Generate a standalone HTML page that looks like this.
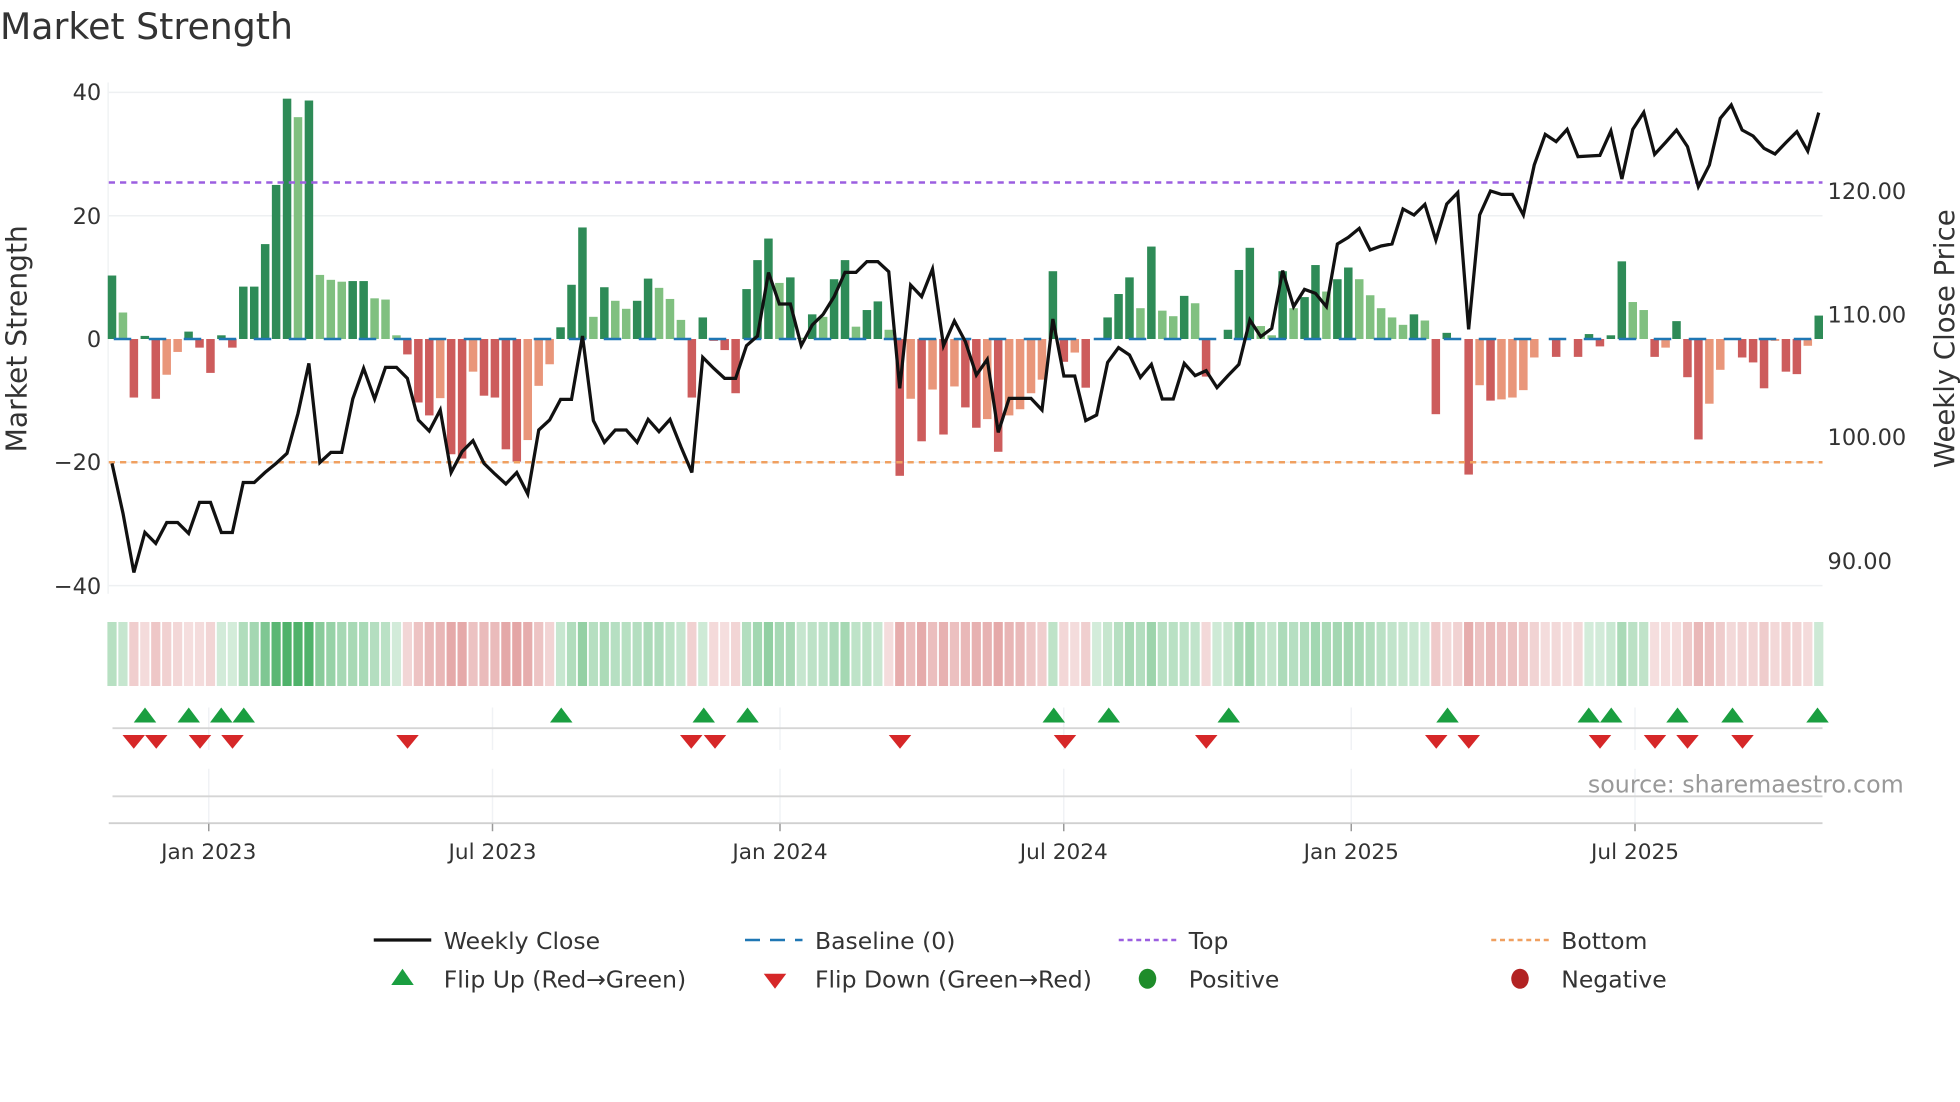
<!DOCTYPE html>
<html><head><meta charset="utf-8"><style>
html,body{margin:0;padding:0;background:#fff;width:1960px;height:1102px;overflow:hidden}
svg{display:block;font-family:"DejaVu Sans","Liberation Sans",sans-serif}
</style></head><body>
<svg id="s" width="1960" height="1102" viewBox="0 0 1568 881.6" xmlns="http://www.w3.org/2000/svg">
<rect width="1568" height="881.6" fill="#fff"/>
<text x="0" y="31" font-size="29" fill="#333">Market Strength</text>
<g stroke="#eef0f2" stroke-width="1.2">
<line x1="87" y1="73.9" x2="1458" y2="73.9"/>
<line x1="87" y1="172.6" x2="1458" y2="172.6"/>
<line x1="87" y1="369.8" x2="1458" y2="369.8"/>
<line x1="87" y1="468.5" x2="1458" y2="468.5"/>
</g>
<line x1="86.5" y1="66" x2="86.5" y2="475" stroke="#eef0f2" stroke-width="1"/>
<g font-size="18" fill="#333" text-anchor="end">
<text x="81" y="80">40</text><text x="81" y="179">20</text><text x="81" y="277.5">0</text>
<text x="81" y="376">−20</text><text x="81" y="475">−40</text>
</g>
<g font-size="18" fill="#333">
<text x="1462" y="159">120.00</text><text x="1462" y="258">110.00</text>
<text x="1462" y="356">100.00</text><text x="1462" y="455">90.00</text>
</g>
<text transform="translate(21,271) rotate(-90)" font-size="22.5" fill="#333" text-anchor="middle">Market Strength</text>
<text transform="translate(1563,271) rotate(-90)" font-size="22" fill="#333" text-anchor="middle">Weekly Close Price</text>
<g id="bars"></g>
<line x1="87" y1="271.2" x2="1458" y2="271.2" stroke="#1f77b4" stroke-width="2" stroke-dasharray="14,14" stroke-dashoffset="-4"/>
<line x1="87" y1="146" x2="1458" y2="146" stroke="#9b5fe0" stroke-width="2" stroke-dasharray="5,4"/>
<line x1="87" y1="369.8" x2="1458" y2="369.8" stroke="#f0a060" stroke-width="2" stroke-dasharray="5,4"/>
<polyline id="pl" fill="none" stroke="#111" stroke-width="2.6" stroke-linejoin="miter"/>
<g id="strip"></g>
<g stroke="#f0f2f5" stroke-width="1.2">
<line x1="167" y1="566" x2="167" y2="600"/><line x1="394" y1="566" x2="394" y2="600"/>
<line x1="624" y1="566" x2="624" y2="600"/><line x1="851" y1="566" x2="851" y2="600"/>
<line x1="1081" y1="566" x2="1081" y2="600"/><line x1="1308" y1="566" x2="1308" y2="600"/>
<line x1="167" y1="615" x2="167" y2="658"/><line x1="394" y1="615" x2="394" y2="658"/>
<line x1="624" y1="615" x2="624" y2="658"/><line x1="851" y1="615" x2="851" y2="658"/>
<line x1="1081" y1="615" x2="1081" y2="658"/><line x1="1308" y1="615" x2="1308" y2="658"/>
</g>
<line x1="90" y1="582.5" x2="1458" y2="582.5" stroke="#d5d5d5" stroke-width="1.5"/>
<line x1="90" y1="637" x2="1458" y2="637" stroke="#d5d5d5" stroke-width="1.5"/>
<line x1="87" y1="658.5" x2="1458" y2="658.5" stroke="#d0d0d0" stroke-width="1.5"/>
<g stroke="#999" stroke-width="1.2">
<line x1="167" y1="659" x2="167" y2="665"/><line x1="394" y1="659" x2="394" y2="665"/>
<line x1="624" y1="659" x2="624" y2="665"/><line x1="851" y1="659" x2="851" y2="665"/>
<line x1="1081" y1="659" x2="1081" y2="665"/><line x1="1308" y1="659" x2="1308" y2="665"/>
</g>
<g id="mk"></g>
<text x="1523" y="634" font-size="19" fill="#999" text-anchor="end">source: sharemaestro.com</text>
<g font-size="17.3" fill="#333" text-anchor="middle">
<text x="167" y="687">Jan 2023</text><text x="394" y="687">Jul 2023</text>
<text x="624" y="687">Jan 2024</text><text x="851" y="687">Jul 2024</text>
<text x="1081" y="687">Jan 2025</text><text x="1308" y="687">Jul 2025</text>
</g>
<g font-size="18.8" fill="#333">
<line x1="299" y1="752" x2="345" y2="752" stroke="#111" stroke-width="2.6"/>
<text x="355" y="759">Weekly Close</text>
<line x1="596" y1="752" x2="642" y2="752" stroke="#1f77b4" stroke-width="2" stroke-dasharray="12,8"/>
<text x="652" y="759">Baseline (0)</text>
<line x1="895" y1="752" x2="941" y2="752" stroke="#9b5fe0" stroke-width="2" stroke-dasharray="4,3"/>
<text x="951" y="759">Top</text>
<line x1="1193" y1="752" x2="1239" y2="752" stroke="#f0a060" stroke-width="2" stroke-dasharray="4,3"/>
<text x="1249" y="759">Bottom</text>
<polygon points="313,788 331,788 322,775" fill="#1a9e40"/>
<text x="355" y="790">Flip Up (Red→Green)</text>
<polygon points="611,779 629,779 620,791" fill="#d62728"/>
<text x="652" y="790">Flip Down (Green→Red)</text>
<ellipse cx="918" cy="783" rx="7" ry="8" fill="#1e8c2a"/>
<text x="951" y="790">Positive</text>
<ellipse cx="1216" cy="783" rx="7" ry="8" fill="#b22222"/>
<text x="1249" y="790">Negative</text>
</g>
</svg>
<script>
var V=[10.3,4.3,-9.5,0.5,-9.7,-5.8,-2.1,1.2,-1.4,-5.5,0.6,-1.4,8.5,8.5,15.4,25,39,36,38.7,10.4,9.6,9.3,9.4,9.4,6.6,6.4,0.6,-2.5,-10.3,-12.4,-9.6,-18.7,-19.4,-5.3,-9.2,-9.5,-17.9,-19.9,-16.4,-7.6,-4.1,1.9,8.8,18.1,3.6,8.4,6.2,4.9,6.2,9.8,8.3,6.5,3.1,-9.5,3.5,-0.3,-1.8,-8.8,8.1,12.8,16.3,9.1,10,0.2,4,3.6,9.7,12.8,2,4.7,6.1,1.5,-22.2,-9.7,-16.6,-8.2,-15.5,-7.7,-11.1,-14.4,-13,-18.3,-12.4,-11.4,-8.8,-6.6,11,-3.7,-2.2,-7.9,0,3.5,7.3,10,5,15,4.6,3.7,7,5.8,-6.1,0,1.5,11.2,14.8,2.1,0.6,11,5,6.8,12,7.7,9.7,11.6,9.7,7.1,5,3.5,2.3,4,3,-12.2,1,0,-22,-7.5,-10,-9.8,-9.5,-8.3,-3,0,-2.9,0,-2.9,0.8,-1.2,0.6,12.6,6,4.7,-2.9,-1.4,2.9,-6.2,-16.3,-10.5,-5,0,-3,-3.8,-8,-0.3,-5.3,-5.7,-1.1,3.8];
var L=[370.7,410.7,458,425.9,434.7,418,418,426.7,401.9,401.9,426,426,386,386,377.9,370.7,362.7,330.7,290.7,370,361.9,361.9,319.2,294.7,319.2,293.9,293.9,302.7,336,344.8,328,378,361.3,352.5,370.7,379.2,387.2,378,395.2,344,336,319.5,319.5,268.8,336.5,353.9,344,344,353.9,335.5,345.3,335.5,357.3,378,285.9,294.7,302.7,302.7,276.5,268.8,218,243.2,243.2,276.5,260,251.5,237.3,217.9,217.9,209.3,209.3,217.3,310.7,228,237.3,215.2,276.5,256.8,273.3,300,287.5,345.9,318.7,318.7,318.7,328,255.2,300.8,300.8,336.5,332,289.9,278.1,284,301.9,291.5,319.2,319.2,290.7,300.5,296.5,310.1,300.5,291.5,256,269.3,262.7,216.5,245.3,231.5,234.7,245.3,195.2,189.9,182.7,200,196.8,195.2,167.2,172,163.5,192,163.2,154.1,263.5,172,152.8,155.5,155.5,172,132,107.5,113.3,103.5,125.3,124.8,124.3,104.8,143.2,103.5,89.9,123.5,113.9,104,117.3,149.3,132,94.7,84,104,108.8,118.7,123.2,114.1,105.3,120.8,90.1];
var NS="http://www.w3.org/2000/svg",x0=89.6,dx=(1455-89.6)/156,Z=271.2,K=4.93;
function el(t,a,p){var e=document.createElementNS(NS,t);for(var k in a)e.setAttribute(k,a[k]);p.appendChild(e);return e;}
var B=document.getElementById('bars'),S=document.getElementById('strip'),pts=[];
for(var i=0;i<V.length;i++){var v=V[i],cx=x0+i*dx,h=Math.abs(v)*K,prev=i?V[i-1]:v;
 var c;if(v>=0)c=(v>=prev)?'#2e8b57':'#80c080';else c=(v<=prev)?'#cd5c5c':'#e9967a';
 if(h>0.3)el('rect',{x:cx-3.4,y:v>=0?Z-h:Z,width:6.8,height:h,fill:c},B);
 var m=0,n=0;for(var j=Math.max(0,i-2);j<=Math.min(V.length-1,i+2);j++){m+=V[j];n++;}m/=n;
 var s=(m*0.5+v*0.5),a=Math.min(0.9,0.22+Math.abs(s)/40);
 el('rect',{x:cx-dx/2+0.7,y:497.6,width:dx-1.4,height:51.2,fill:s>=0?'rgb(60,170,90)':'rgb(205,92,92)','fill-opacity':s>=0?a:a*0.85},S);
 pts.push(cx.toFixed(1)+','+L[i]);}
document.getElementById('pl').setAttribute('points',pts.join(' '));
var M=document.getElementById('mk');
[116,151,177,195,449,563,598,843,887,983,1158,1271,1289,1342,1386,1454].forEach(function(x){el('polygon',{points:(x-9)+',578 '+(x+9)+',578 '+x+',566',fill:'#1a9e40'},M);});
[107,125,160,186,326,553,572,720,852,965,1149,1175,1280,1324,1350,1394].forEach(function(x){el('polygon',{points:(x-9)+',588 '+(x+9)+',588 '+x+',599',fill:'#d62728'},M);});
</script>
</body></html>
